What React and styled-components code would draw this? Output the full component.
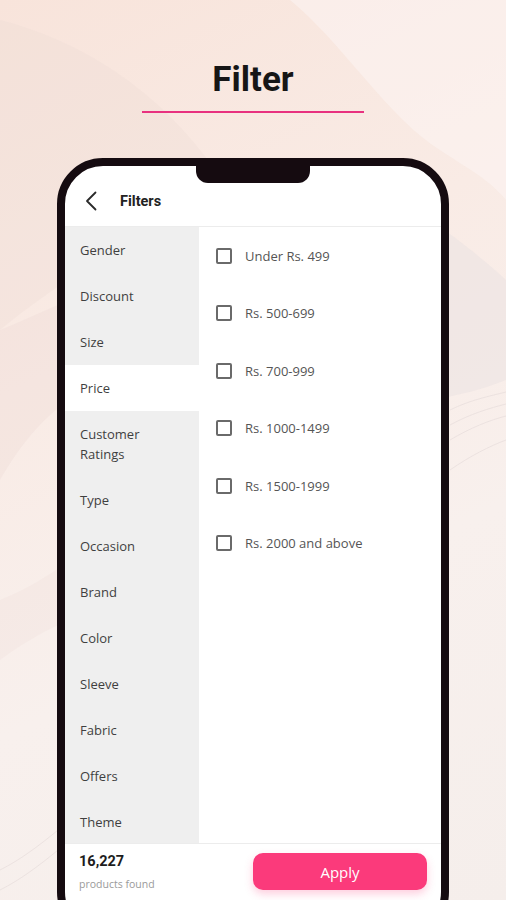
import React from "react";
import styled, { createGlobalStyle } from "styled-components";

const GlobalStyle = createGlobalStyle`
  html, body { margin: 0; padding: 0; }
  body { font-family: "Open Sans", "Liberation Sans", sans-serif; }
`;

const Page = styled.div`
  position: relative;
  width: 506px;
  height: 900px;
  overflow: hidden;
  display: flex;
  flex-direction: column;
  align-items: center;
  background: linear-gradient(155deg, #f8e4db 0%, #f9ebe5 35%, #f8f0ed 65%, #f5eeeb 100%);
  & > * { flex-shrink: 0; }
`;

const Backdrop = styled.svg`
  position: absolute;
  inset: 0;
  z-index: 0;
`;

const Heading = styled.h1`
  position: relative;
  z-index: 1;
  margin: 60px 0 0;
  font-family: Roboto, "Liberation Sans", sans-serif;
  font-size: 35px;
  line-height: 40px;
  font-weight: 700;
  color: #161616;
`;

const Underline = styled.div`
  position: relative;
  z-index: 1;
  width: 222px;
  height: 2px;
  margin-top: 11px;
  background: #e8317f;
`;

const Phone = styled.div`
  position: relative;
  z-index: 1;
  width: 392px;
  height: 780px;
  margin-top: 45px;
  box-sizing: border-box;
  border: 8px solid #150b10;
  border-radius: 46px;
  background: #fff;
  overflow: hidden;
  display: flex;
  flex-direction: column;
`;

const Notch = styled.div`
  position: absolute;
  top: 0;
  left: 50%;
  transform: translateX(-50%);
  width: 114px;
  height: 17px;
  background: #150b10;
  border-radius: 0 0 12px 12px;
`;

const Header = styled.div`
  flex-shrink: 0;
  height: 61px;
  padding: 10px 0 0 20px;
  box-sizing: border-box;
  display: flex;
  align-items: center;
  gap: 23px;
  border-bottom: 1px solid #ececec;
`;

const HeaderTitle = styled.span`
  font-family: Roboto, "Liberation Sans", sans-serif;
  font-size: 14.5px;
  font-weight: 700;
  color: #222;
`;

const Body = styled.div`
  flex-shrink: 0;
  display: flex;
  height: 616px;
`;

const Sidebar = styled.div`
  width: 134px;
  background: #efefef;
  display: flex;
  flex-direction: column;
  overflow: hidden;
`;

const SideItem = styled.div`
  flex-shrink: 0;
  height: ${(p) => (p.tall ? 66 : 46)}px;
  padding-left: 15px;
  display: flex;
  align-items: center;
  font-size: 13px;
  line-height: 20px;
  color: #3f3f3f;
  background: ${(p) => (p.active ? "#fff" : "transparent")};
`;

const Options = styled.div`
  flex: 1;
  padding-left: 17px;
  display: flex;
  flex-direction: column;
`;

const Option = styled.label`
  flex-shrink: 0;
  height: 57.5px;
  display: flex;
  align-items: center;
  gap: 13px;
  font-size: 13px;
  color: #555;
`;

const Box = styled.span`
  width: 16px;
  height: 16px;
  box-sizing: border-box;
  border: 2px solid #6a6a6a;
  border-radius: 2px;
`;

const Footer = styled.div`
  flex: 1;
  border-top: 1px solid #ececec;
  padding: 9px 14px 0 14px;
  display: flex;
  justify-content: space-between;
  align-items: flex-start;
`;

const Count = styled.div`
  display: flex;
  flex-direction: column;
  gap: 5px;
  padding-top: 0;
`;

const CountNumber = styled.span`
  font-family: Roboto, "Liberation Sans", sans-serif;
  font-size: 14.5px;
  line-height: 18px;
  font-weight: 700;
  color: #1d1d1d;
`;

const CountLabel = styled.span`
  font-size: 10.5px;
  line-height: 16px;
  color: #9a9a9a;
`;

const ApplyButton = styled.button`
  width: 174px;
  height: 37px;
  padding: 0;
  border: none;
  border-radius: 10px;
  background: #fb3a7b;
  color: #fff;
  font-family: "Open Sans", "Liberation Sans", sans-serif;
  font-size: 15px;
  box-shadow: 0 4px 8px rgba(251, 58, 123, 0.25);
`;

const categories = [
  "Gender",
  "Discount",
  "Size",
  "Price",
  "Customer Ratings",
  "Type",
  "Occasion",
  "Brand",
  "Color",
  "Sleeve",
  "Fabric",
  "Offers",
  "Theme",
];

const prices = [
  "Under Rs. 499",
  "Rs. 500-699",
  "Rs. 700-999",
  "Rs. 1000-1499",
  "Rs. 1500-1999",
  "Rs. 2000 and above",
];

const BackArrow = () => (
  <svg width="12" height="20" viewBox="0 0 12 20" fill="none">
    <path d="M10.5 1.5 L2 10 L10.5 18.5" stroke="#2a2a2a" strokeWidth="1.8" strokeLinecap="round" strokeLinejoin="round" />
  </svg>
);

export default function App() {
  return (
    <>
      <GlobalStyle />
      <Page>
        <Backdrop width="506" height="900" viewBox="0 0 506 900">
          <path d="M0 20 C80 40 160 90 215 170 C150 230 60 280 0 330 Z" fill="#ecd9d4" opacity="0.3" />
          <path d="M290 0 C340 40 390 120 440 150 C470 170 490 180 506 200 L506 0 Z" fill="#fbf4f1" opacity="0.6" />
          <path d="M430 220 C460 240 490 265 506 280 L506 380 C480 390 460 395 430 400 Z" fill="#e9e2e2" opacity="0.5" />
          <path d="M0 330 C25 320 45 310 70 300 L70 400 C45 415 20 445 0 480 Z" fill="#ead8d4" opacity="0.3" />
          <path d="M0 600 C25 590 50 575 70 560 L70 620 C45 630 20 645 0 660 Z" fill="#efdedb" opacity="0.3" />
          <g stroke="#e6dcda" strokeWidth="0.8" fill="none" opacity="0.8">
            <path d="M450 410 C470 400 490 396 506 392" />
            <path d="M450 425 C470 414 490 408 506 404" />
            <path d="M450 440 C470 428 490 420 506 416" />
            <path d="M450 470 C470 456 490 446 506 440" />
            <path d="M0 870 C20 860 40 845 58 830" />
            <path d="M0 890 C20 880 40 865 58 850" />
          </g>
        </Backdrop>
        <Heading>Filter</Heading>
        <Underline />
        <Phone>
          <Notch />
          <Header>
            <BackArrow />
            <HeaderTitle>Filters</HeaderTitle>
          </Header>
          <Body>
            <Sidebar>
              {categories.map((c) => (
                <SideItem key={c} active={c === "Price"} tall={c === "Customer Ratings"}>
                  {c === "Customer Ratings" ? (
                    <span>
                      Customer
                      <br />
                      Ratings
                    </span>
                  ) : (
                    c
                  )}
                </SideItem>
              ))}
            </Sidebar>
            <Options>
              {prices.map((p) => (
                <Option key={p}>
                  <Box />
                  {p}
                </Option>
              ))}
            </Options>
          </Body>
          <Footer>
            <Count>
              <CountNumber>16,227</CountNumber>
              <CountLabel>products found</CountLabel>
            </Count>
            <ApplyButton>Apply</ApplyButton>
          </Footer>
        </Phone>
      </Page>
    </>
  );
}
